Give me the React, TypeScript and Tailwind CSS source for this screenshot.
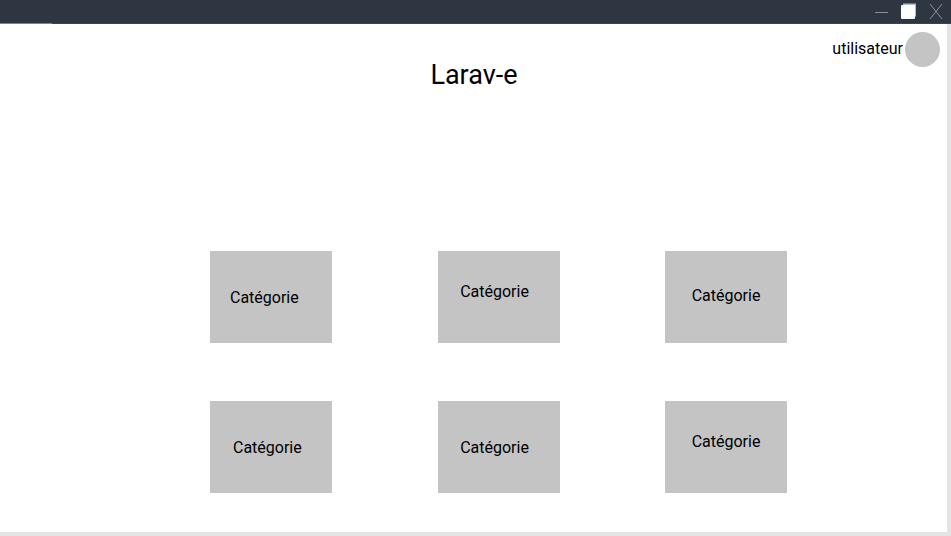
import React from "react";

const boxes = [
  { cls: "justify-start pl-5 pt-[2px]" },
  { cls: "justify-center pr-2 pb-[10px]" },
  { cls: "justify-center pb-[2px]" },
  { cls: "justify-start pl-[23px] pt-[2px]" },
  { cls: "justify-center pr-2 pt-[2px]" },
  { cls: "justify-center pb-[10px]" },
];

function WindowControls() {
  return (
    <div className="flex items-center gap-[12px] pr-[8px]">
      <div className="w-[13px] h-[1px] bg-[#8b9199] mt-[1px]" />
      <svg width="17" height="17" viewBox="0 0 17 17">
        <rect x="3" y="0.5" width="13" height="13" fill="#b8bcc2" />
        <rect x="1" y="2" width="14" height="14" rx="1" fill="#ffffff" />
      </svg>
      <svg width="14" height="17" viewBox="0 0 14 17">
        <path d="M1 1 L13 16 M13 1 L1 16" stroke="#8b9199" strokeWidth="1" fill="none" />
      </svg>
    </div>
  );
}

export default function App() {
  return (
    <div
      className="w-[951px] h-[536px] flex flex-col bg-[#e4e4e4] overflow-hidden"
      style={{ fontFamily: "Roboto, 'Liberation Sans', sans-serif" }}
    >
      <div className="h-[23px] bg-[#2e3641] flex items-center justify-end">
        <WindowControls />
      </div>
      <div className="h-[1px] flex bg-[#3c434c]">
        <div className="w-[52px] bg-[#80858b]" />
      </div>
      <div className="w-[947px] h-[508px] bg-white flex flex-col">
        <div className="grid grid-cols-[1fr_auto_1fr] items-start">
          <div />
          <h1 className="text-[27px] leading-[32px] text-black mt-[35px] ml-[1px]">Larav-e</h1>
          <div className="flex items-center justify-end mt-[8px] mr-[7px]">
            <span className="text-[16px] text-black mb-[1px]">utilisateur</span>
            <div className="w-[35px] h-[35px] rounded-full bg-[#c4c4c4] ml-[2px]" />
          </div>
        </div>
        <div className="grid grid-cols-[122px_122px_122px] gap-x-[105.5px] gap-y-[58px] ml-[210px] mt-[160px]">
          {boxes.map((b, i) => (
            <div key={i} className={"h-[92px] bg-[#c4c4c4] flex items-center " + b.cls}>
              <span className="text-[16px] text-black">Catégorie</span>
            </div>
          ))}
        </div>
      </div>
    </div>
  );
}
